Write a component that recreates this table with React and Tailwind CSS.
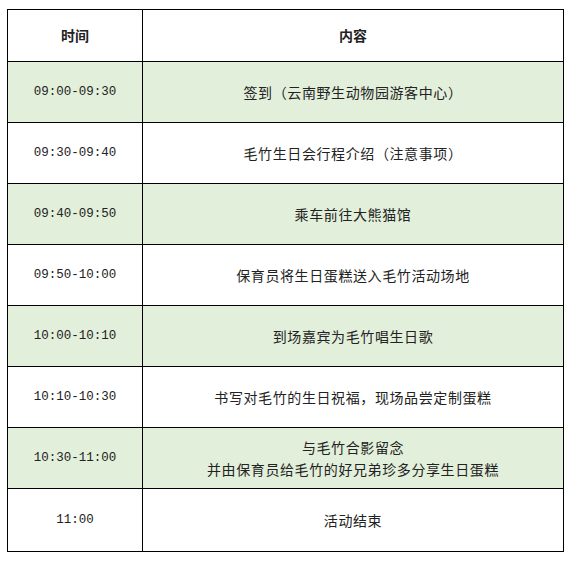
const rows = [
  { time: '09:00-09:30', text: ['签到（云南野生动物园游客中心）'], green: true },
  { time: '09:30-09:40', text: ['毛竹生日会行程介绍（注意事项）'] },
  { time: '09:40-09:50', text: ['乘车前往大熊猫馆'], green: true },
  { time: '09:50-10:00', text: ['保育员将生日蛋糕送入毛竹活动场地'] },
  { time: '10:00-10:10', text: ['到场嘉宾为毛竹唱生日歌'], green: true },
  { time: '10:10-10:30', text: ['书写对毛竹的生日祝福，现场品尝定制蛋糕'] },
  { time: '10:30-11:00', text: ['与毛竹合影留念', '并由保育员给毛竹的好兄弟珍多分享生日蛋糕'], green: true },
  { time: '11:00', text: ['活动结束'], last: true },
];

export default function App() {
  return (
    <div className="pl-[7px] pt-[9px] bg-white w-[570px] h-[565px] text-[14px] text-[#222] font-['Noto_Sans_CJK_SC',sans-serif]">
      <table className="border-collapse w-[556px] table-fixed">
        <colgroup>
          <col className="w-[135px]" />
          <col className="w-[421px]" />
        </colgroup>
        <thead>
          <tr className="h-[52px]">
            <th className="border border-black font-bold text-center">时间</th>
            <th className="border border-black font-bold text-center">内容</th>
          </tr>
        </thead>
        <tbody>
          {rows.map((r) => (
            <tr key={r.time} className={`${r.last ? 'h-[63px]' : 'h-[61px]'} ${r.green ? 'bg-[#e2efda]' : 'bg-white'}`}>
              <td className="border border-black text-center font-['Liberation_Mono',monospace] text-[12.5px]">{r.time}</td>
              <td className="border border-black text-center leading-[22px] tracking-[0.6px]">
                {r.text.map((t) => (
                  <div key={t}>{t}</div>
                ))}
              </td>
            </tr>
          ))}
        </tbody>
      </table>
    </div>
  );
}
